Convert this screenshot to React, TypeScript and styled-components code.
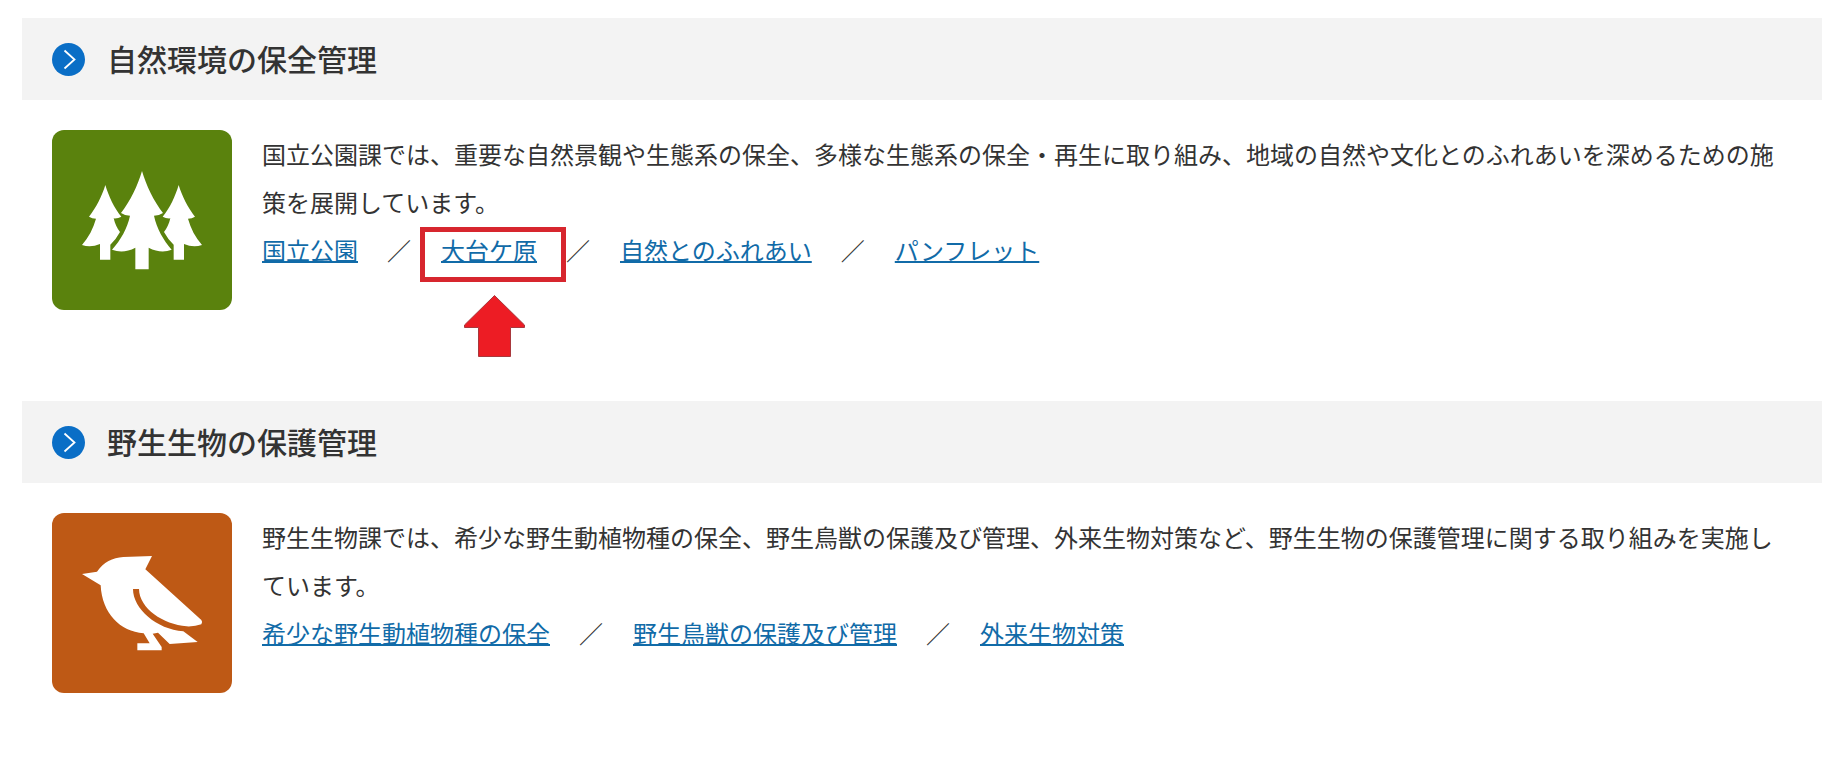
import React from "react";
import styled, { createGlobalStyle } from "styled-components";

const GlobalStyle = createGlobalStyle`
  * { box-sizing: border-box; }
  body {
    margin: 0;
    background: #fff;
    color: #333;
    font-family: "Noto Sans CJK JP", sans-serif;
    font-size: 24px;
    line-height: 48px;
  }
`;

const Page = styled.main`
  padding: 18px 17px 0 22px;
`;

const Section = styled.section`
  margin-bottom: 91px;
`;

const SectionHeader = styled.header`
  display: flex;
  align-items: center;
  gap: 22px;
  padding: 17px 30px;
  background: #f3f3f3;
`;

const Bullet = styled.svg`
  flex: none;
  width: 33px;
  height: 33px;
`;

const Title = styled.h2`
  margin: 0;
  padding-bottom: 2px;
  font-size: 30px;
  font-weight: 500;
  line-height: 46px;
`;

const Body = styled.div`
  display: flex;
  align-items: flex-start;
  gap: 30px;
  padding: 30px 30px 0;
`;

const Pictogram = styled.svg<{ $color: string }>`
  flex: none;
  width: 180px;
  height: 180px;
  border-radius: 12px;
  background: ${(p) => p.$color};
  fill: #fff;
`;

const Content = styled.div`
  flex: 1;
  min-width: 0;
`;

const Description = styled.p`
  margin: 0;
`;

const LinkList = styled.nav`
  display: flex;
  flex-wrap: wrap;
`;

const LinkItem = styled.span`
  position: relative;
`;

const TextLink = styled.a`
  color: #116ba8;
  text-decoration: underline;
  text-decoration-thickness: 2px;
  text-decoration-skip-ink: none;
`;

const Separator = styled.span`
  padding: 0 30px 0 29px;
`;

const HighlightFrame = styled.span`
  position: absolute;
  top: 1px;
  left: -21px;
  right: -29px;
  height: 55px;
  border: 5px solid #d7262e;
  pointer-events: none;
`;

const HighlightArrow = styled.svg`
  position: absolute;
  top: 69px;
  left: 23px;
  width: 61px;
  height: 62px;
  pointer-events: none;
`;

const Trees = () => (
  <Pictogram $color="#5a820d" viewBox="36 30 540 540" aria-hidden="true">
    <path d="M306 153C318 195 342 245 369 279Q358 287 342 287C350 325 370 360 395 389Q363 402 326 383V448H286V383Q250 402 216 389C242 360 262 325 270 287Q254 287 243 279C270 245 294 195 306 153Z" />
    <path d="M196 195C206 228 222 264 244 290Q234 296 221 295C225 312 231 325 240 336Q229 357 211 374V419H180V372Q152 384 126 375C146 352 160 325 168 296Q156 296 147 290C168 264 186 228 196 195Z" />
    <path d="M416 195C406 228 390 264 368 290Q378 296 391 295C387 312 381 325 372 336Q383 357 401 374V419H432V372Q460 384 486 375C466 352 452 325 444 296Q456 296 465 290C444 264 426 228 416 195Z" />
  </Pictogram>
);

const Bird = () => (
  <Pictogram $color="#be5915" viewBox="36 39 540 540" aria-hidden="true">
    <path d="M126 222L171 215C190 187 218 173 250 171L336 168L316 208L484 360Q489 366 484 373Q465 380 440 379C370 373 298 326 297 267H279C279 326 350 388 430 394L473 426L389 432L354 398L338 401L365 441V451H292V430H329L311 400C240 395 186 340 182 256Z" />
  </Pictogram>
);

type SectionData = {
  title: string;
  description: string;
  icon: React.ReactNode;
  links: { label: string; highlighted?: boolean }[];
};

const sections: SectionData[] = [
  {
    title: "自然環境の保全管理",
    description:
      "国立公園課では、重要な自然景観や生態系の保全、多様な生態系の保全・再生に取り組み、地域の自然や文化とのふれあいを深めるための施策を展開しています。",
    icon: <Trees />,
    links: [
      { label: "国立公園" },
      { label: "大台ケ原", highlighted: true },
      { label: "自然とのふれあい" },
      { label: "パンフレット" },
    ],
  },
  {
    title: "野生生物の保護管理",
    description:
      "野生生物課では、希少な野生動植物種の保全、野生鳥獣の保護及び管理、外来生物対策など、野生生物の保護管理に関する取り組みを実施しています。",
    icon: <Bird />,
    links: [
      { label: "希少な野生動植物種の保全" },
      { label: "野生鳥獣の保護及び管理" },
      { label: "外来生物対策" },
    ],
  },
];

export default function App() {
  return (
    <Page lang="ja">
      <GlobalStyle />
      {sections.map((section) => (
        <Section key={section.title}>
          <SectionHeader>
            <Bullet viewBox="0 0 33 33" aria-hidden="true">
              <circle cx="16.5" cy="16.5" r="16.5" fill="#0a6ec6" />
              <path d="M12.5 7.5L22.5 16.5L12.5 25.5" fill="none" stroke="#fff" strokeWidth="1.8" />
            </Bullet>
            <Title>{section.title}</Title>
          </SectionHeader>
          <Body>
            {section.icon}
            <Content>
              <Description>{section.description}</Description>
              <LinkList aria-label={section.title}>
                {section.links.map((link, i) => (
                  <React.Fragment key={link.label}>
                    {i > 0 && <Separator>／</Separator>}
                    <LinkItem>
                      <TextLink href="#">{link.label}</TextLink>
                      {link.highlighted && (
                        <>
                          <HighlightFrame />
                          <HighlightArrow viewBox="0 0 61 62" aria-hidden="true">
                            <path
                              d="M30.5 0.5L60.5 30V32.5H46.5V61.5H14.5V32.5H0.5V30Z"
                              fill="#ed1c24"
                              stroke="#a8383c"
                              strokeWidth="1"
                            />
                          </HighlightArrow>
                        </>
                      )}
                    </LinkItem>
                  </React.Fragment>
                ))}
              </LinkList>
            </Content>
          </Body>
        </Section>
      ))}
    </Page>
  );
}
